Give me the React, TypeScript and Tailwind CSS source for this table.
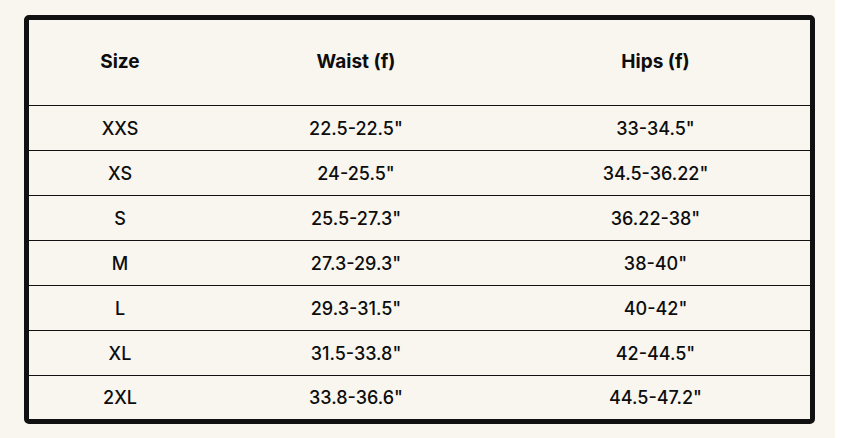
const rows: [string, string, string][] = [
  ["XXS", "22.5-22.5\"", "33-34.5\""],
  ["XS", "24-25.5\"", "34.5-36.22\""],
  ["S", "25.5-27.3\"", "36.22-38\""],
  ["M", "27.3-29.3\"", "38-40\""],
  ["L", "29.3-31.5\"", "40-42\""],
  ["XL", "31.5-33.8\"", "42-44.5\""],
  ["2XL", "33.8-36.6\"", "44.5-47.2\""],
];

export default function App() {
  return (
    <div
      className="h-[438px] w-[835px] bg-[#f9f6f0] pl-6 pt-[15px] text-[#0d0d0d]"
      style={{ fontFamily: "Inter, 'Noto Sans', sans-serif" }}
    >
      <div className="w-[791px] overflow-hidden rounded-[5px] border-[5px] border-[#111]">
        <div className="grid h-[86px] grid-cols-[182px_290px_1fr] items-center border-b border-[#111] text-[19px] font-bold">
          <div className="text-center">Size</div>
          <div className="text-center">Waist (f)</div>
          <div className="text-center">Hips (f)</div>
        </div>
        {rows.map((r, i) => (
          <div
            key={r[0]}
            className={
              "grid grid-cols-[182px_290px_1fr] items-center text-[18px] font-medium " +
              (i < rows.length - 1 ? "h-[45px] border-b border-[#111]" : "h-[43px]")
            }
          >
            <div className="text-center">{r[0]}</div>
            <div className="text-center">{r[1]}</div>
            <div className="text-center">{r[2]}</div>
          </div>
        ))}
      </div>
    </div>
  );
}
